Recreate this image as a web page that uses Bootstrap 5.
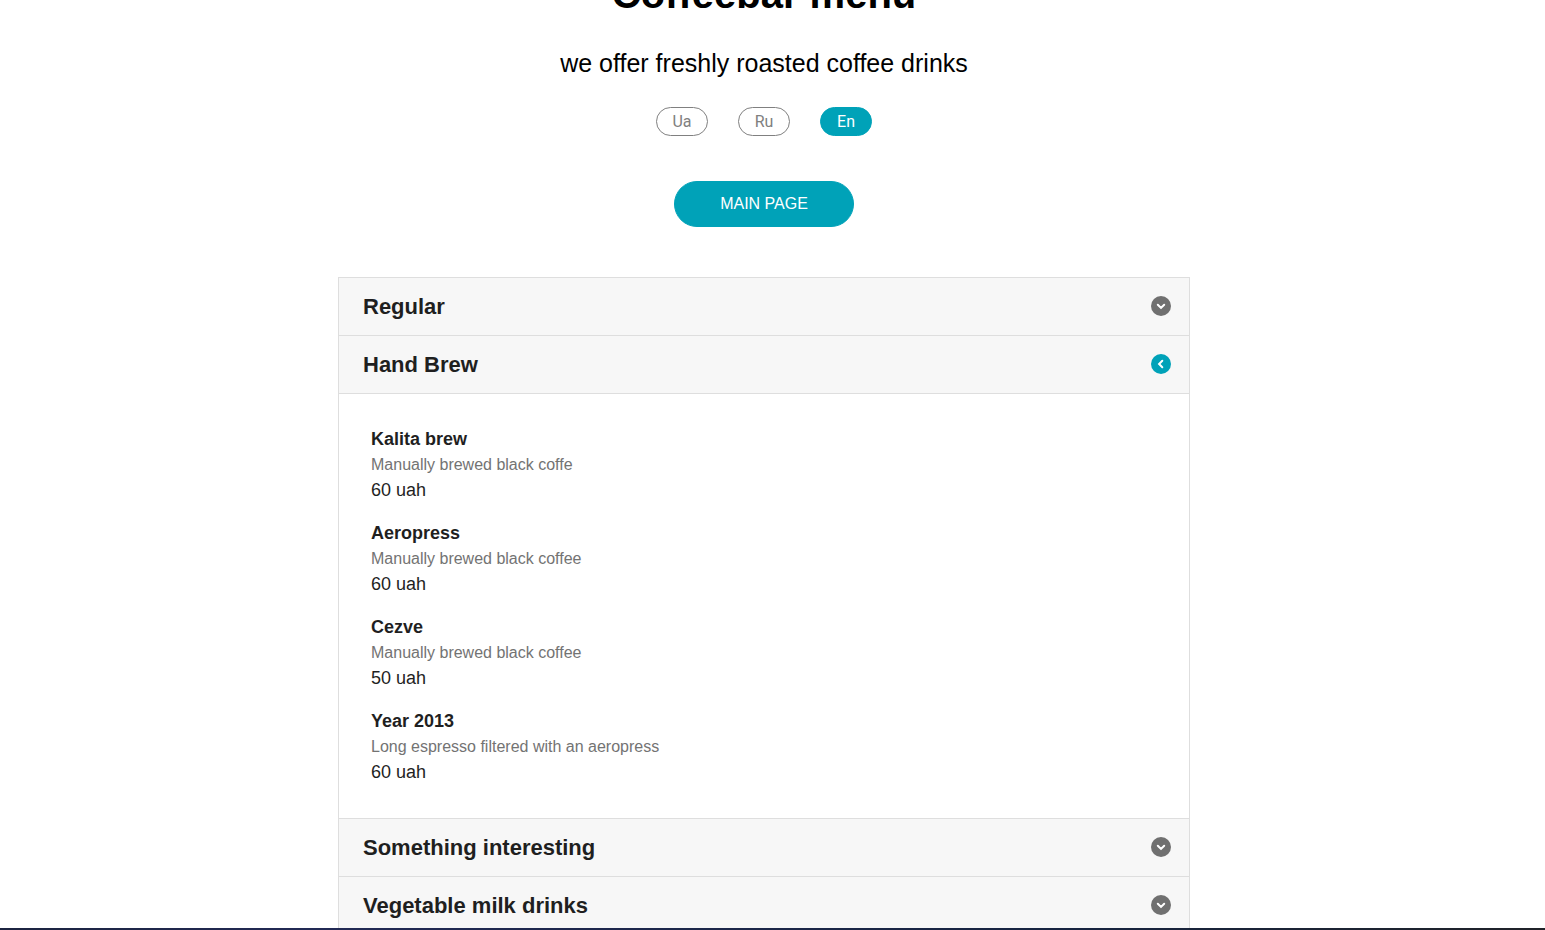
<!DOCTYPE html>
<html lang="en">
<head>
<meta charset="utf-8">
<meta name="viewport" content="width=device-width, initial-scale=1">
<title>Coffeebar menu</title>
<link href="https://cdn.jsdelivr.net/npm/bootstrap@5.3.0/dist/css/bootstrap.min.css" rel="stylesheet">
<style>
  :root { --teal: #00a2b8; --line: #dedede; --ink: #1f1f1f; }
  body { font-family: "Liberation Sans", Arial, sans-serif; color: var(--ink); }
  .viewport { padding-right: 17px; }
  .menu-page { max-width: 852px; margin-top: -30px; }
  .menu-title { font-size: 40px; line-height: 48px; color: #000; }
  .menu-lead { font-size: 25px; line-height: 32px; margin: 29px 0 28px; color: #000; }
  .langs { gap: 30px; margin-bottom: 45px; }
  .btn-lang { width: 52px; height: 29px; padding: 0; font: 16px/27px Roboto, sans-serif; color: #808080; border: 1px solid #808080; }
  .btn-lang.active, .btn-main, .btn-main:hover { background: var(--teal); border-color: var(--teal); color: #fff; }
  .btn-main { width: 180px; height: 46px; padding: 0; font-size: 16px; margin-bottom: 50px; }
  .menu-list { --bs-accordion-border-color: var(--line); --bs-accordion-border-radius: 0; --bs-accordion-inner-border-radius: 0; --bs-accordion-color: var(--ink); }
  .menu-list .accordion-button { height: 57px; padding: 0 18px 0 24px; font-size: 22px; line-height: 26px; font-weight: 700; color: var(--ink); background: #f7f7f7; box-shadow: none; }
  .menu-list .accordion-button:not(.collapsed) { border-bottom: 1px solid var(--line); height: 58px; }
  .menu-list .accordion-button::after { display: none; }
  .menu-list .arrow { width: 20px; height: 20px; color: #707070; }
  .menu-list .accordion-button:not(.collapsed) .arrow { color: var(--teal); transform: rotate(90deg); }
  .menu-list .accordion-button > span { padding-top: 1px; }
  .menu-list .accordion-button .arrow { margin-bottom: 1px; }
  .menu-list .accordion-body { padding: 32px 32px 33px; }
  .drink { font-size: 18px; line-height: 26px; margin-bottom: 17px; }
  .drink:last-child { margin-bottom: 0; }
  .drink h3 { font-size: 18px; line-height: 26px; font-weight: 700; }
  .drink .about { font-size: 16px; line-height: 25px; color: #737373; }
  .taskbar-edge { height: 2px; background: linear-gradient(90deg, #1c2440, #222a55 20%, #172440 70%, #202329); }
</style>
</head>
<body>
<div class="viewport vh-100 overflow-hidden">
  <main class="menu-page mx-auto d-flex flex-column align-items-center">
    <h1 class="menu-title fw-bold mb-0">Coffeebar menu</h1>
    <p class="menu-lead">we offer freshly roasted coffee drinks</p>
    <nav class="langs d-flex" aria-label="Language">
      <button type="button" class="btn btn-lang rounded-pill">Ua</button>
      <button type="button" class="btn btn-lang rounded-pill">Ru</button>
      <button type="button" class="btn btn-lang rounded-pill active">En</button>
    </nav>
    <button type="button" class="btn btn-main rounded-pill">MAIN PAGE</button>

    <svg class="d-none">
      <symbol id="arrow" viewBox="0 0 20 20"><circle cx="10" cy="10" r="10" fill="currentColor"/><path d="M6.800 8.700 10 11.900l3.200-3.200" fill="none" stroke="#fff" stroke-width="2" stroke-linecap="round"/></symbol>
    </svg>
    <div class="accordion menu-list w-100" id="menu">
      <section class="accordion-item">
        <h2 class="accordion-header"><button class="accordion-button collapsed" type="button" data-bs-toggle="collapse" data-bs-target="#regular"><span>Regular</span><svg class="arrow ms-auto" aria-hidden="true"><use href="#arrow"/></svg></button></h2>
        <div id="regular" class="accordion-collapse collapse"></div>
      </section>
      <section class="accordion-item">
        <h2 class="accordion-header"><button class="accordion-button" type="button" data-bs-toggle="collapse" data-bs-target="#brew" aria-expanded="true"><span>Hand Brew</span><svg class="arrow ms-auto" aria-hidden="true"><use href="#arrow"/></svg></button></h2>
        <div id="brew" class="accordion-collapse collapse show">
          <div class="accordion-body">
            <article class="drink"><h3 class="mb-0">Kalita brew</h3><p class="about mb-0">Manually brewed black coffe</p><p class="mb-0">60 uah</p></article>
            <article class="drink"><h3 class="mb-0">Aeropress</h3><p class="about mb-0">Manually brewed black coffee</p><p class="mb-0">60 uah</p></article>
            <article class="drink"><h3 class="mb-0">Cezve</h3><p class="about mb-0">Manually brewed black coffee</p><p class="mb-0">50 uah</p></article>
            <article class="drink"><h3 class="mb-0">Year 2013</h3><p class="about mb-0">Long espresso filtered with an aeropress</p><p class="mb-0">60 uah</p></article>
          </div>
        </div>
      </section>
      <section class="accordion-item">
        <h2 class="accordion-header"><button class="accordion-button collapsed" type="button" data-bs-toggle="collapse" data-bs-target="#interesting"><span>Something interesting</span><svg class="arrow ms-auto" aria-hidden="true"><use href="#arrow"/></svg></button></h2>
        <div id="interesting" class="accordion-collapse collapse"></div>
      </section>
      <section class="accordion-item">
        <h2 class="accordion-header"><button class="accordion-button collapsed" type="button" data-bs-toggle="collapse" data-bs-target="#vegetable"><span>Vegetable milk drinks</span><svg class="arrow ms-auto" aria-hidden="true"><use href="#arrow"/></svg></button></h2>
        <div id="vegetable" class="accordion-collapse collapse"></div>
      </section>
    </div>
  </main>
</div>
<div class="taskbar-edge fixed-bottom"></div>
<script src="https://cdn.jsdelivr.net/npm/bootstrap@5.3.0/dist/js/bootstrap.bundle.min.js"></script>
</body>
</html>
